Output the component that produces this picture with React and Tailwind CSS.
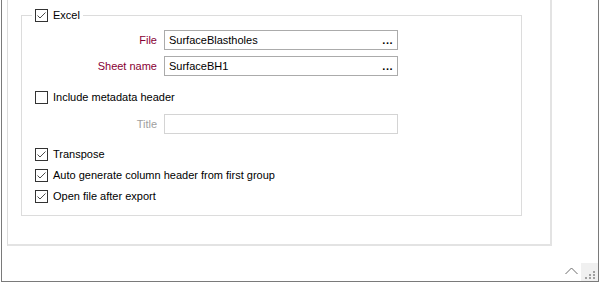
import React from "react";

const font = { fontFamily: '"Liberation Sans", Arial, sans-serif' };

function Check({ checked = true }) {
  return (
    <span className="w-[13px] h-[13px] border border-[#333333] bg-white flex items-center justify-center shrink-0">
      {checked && (
        <svg width="11" height="11" viewBox="0 0 11 11">
          <path d="M1.5 5.5 L4 8 L9.5 2.5" fill="none" stroke="#4a4a4a" strokeWidth="1" />
        </svg>
      )}
    </span>
  );
}

function CheckRow({ label, checked = true, className = "" }) {
  return (
    <div className={`flex items-center gap-[5px] h-[13px] pl-[13px] ${className}`}>
      <Check checked={checked} />
      <span className="text-[11px] leading-[13px] text-black whitespace-nowrap">{label}</span>
    </div>
  );
}

function FieldRow({ label, value, className = "", disabled = false, browse = false }) {
  return (
    <div className={`flex items-center h-[20px] ${className}`}>
      <div
        className={`w-[135px] text-right text-[11px] leading-[13px] whitespace-nowrap ${
          disabled ? "text-[#a0a0a0]" : "text-[#880034]"
        }`}
      >
        {label}
      </div>
      <div
        className={`ml-[7px] w-[234px] h-[20px] border bg-white flex items-center justify-between pl-[4px] pr-[4px] ${
          disabled ? "border-[#d4d4d4]" : "border-[#ababab]"
        }`}
      >
        <span className="text-[11px] leading-[13px] text-black">{value}</span>
        {browse && <span className="text-[11px] font-bold leading-[13px] text-black tracking-[0.5px]">...</span>}
      </div>
    </div>
  );
}

export default function App() {
  return (
    <div className="w-[600px] h-[283px] bg-white overflow-hidden" style={font}>
      <div className="ml-px w-[598px] h-[282px] border-l border-r border-b border-[#7a7a7a] flex flex-col">
        <div className="ml-[5px] w-[545px] h-[246px] shrink-0 border-l border-r-2 border-b-2 border-l-[#dcdcdc] border-r-[#e3e3e3] border-b-[#e3e3e3] pt-[9px]">
          <fieldset className="ml-[13px] w-[501px] border border-[#dcdcdc] pb-[12px]">
            <legend className="ml-[10px] px-[3px] bg-white">
              <div className="flex items-center gap-[5px] h-[13px]">
                <Check />
                <span className="text-[11px] leading-[13px] text-black">Excel</span>
              </div>
            </legend>
            <FieldRow label="File" value="SurfaceBlastholes" browse className="mt-[8px]" />
            <FieldRow label="Sheet name" value="SurfaceBH1" browse className="mt-[6px]" />
            <CheckRow label="Include metadata header" checked={false} className="mt-[15px]" />
            <FieldRow label="Title" value="" disabled className="mt-[10px]" />
            <CheckRow label="Transpose" className="mt-[14px]" />
            <CheckRow label="Auto generate column header from first group" className="mt-[8px]" />
            <CheckRow label="Open file after export" className="mt-[8px]" />
          </fieldset>
        </div>
        <div className="flex-1 flex items-end justify-end">
          <svg width="13" height="8" viewBox="0 0 13 8" className="mb-[6px] mr-[3px]">
            <path d="M0.5 7 L6.5 1 L12.5 7" fill="none" stroke="#6d6d6d" strokeWidth="1" />
          </svg>
          <div className="w-[17px] h-[18px] bg-[#f0f0f0] relative">
            <svg width="17" height="18" viewBox="0 0 17 18">
              <rect x="12" y="8" width="2" height="2" fill="#a0a0a0" />
              <rect x="8" y="11" width="2" height="2" fill="#a0a0a0" />
              <rect x="12" y="11" width="2" height="2" fill="#a0a0a0" />
              <rect x="4" y="14" width="2" height="2" fill="#a0a0a0" />
              <rect x="8" y="14" width="2" height="2" fill="#a0a0a0" />
              <rect x="12" y="14" width="2" height="2" fill="#a0a0a0" />
            </svg>
          </div>
        </div>
      </div>
    </div>
  );
}
